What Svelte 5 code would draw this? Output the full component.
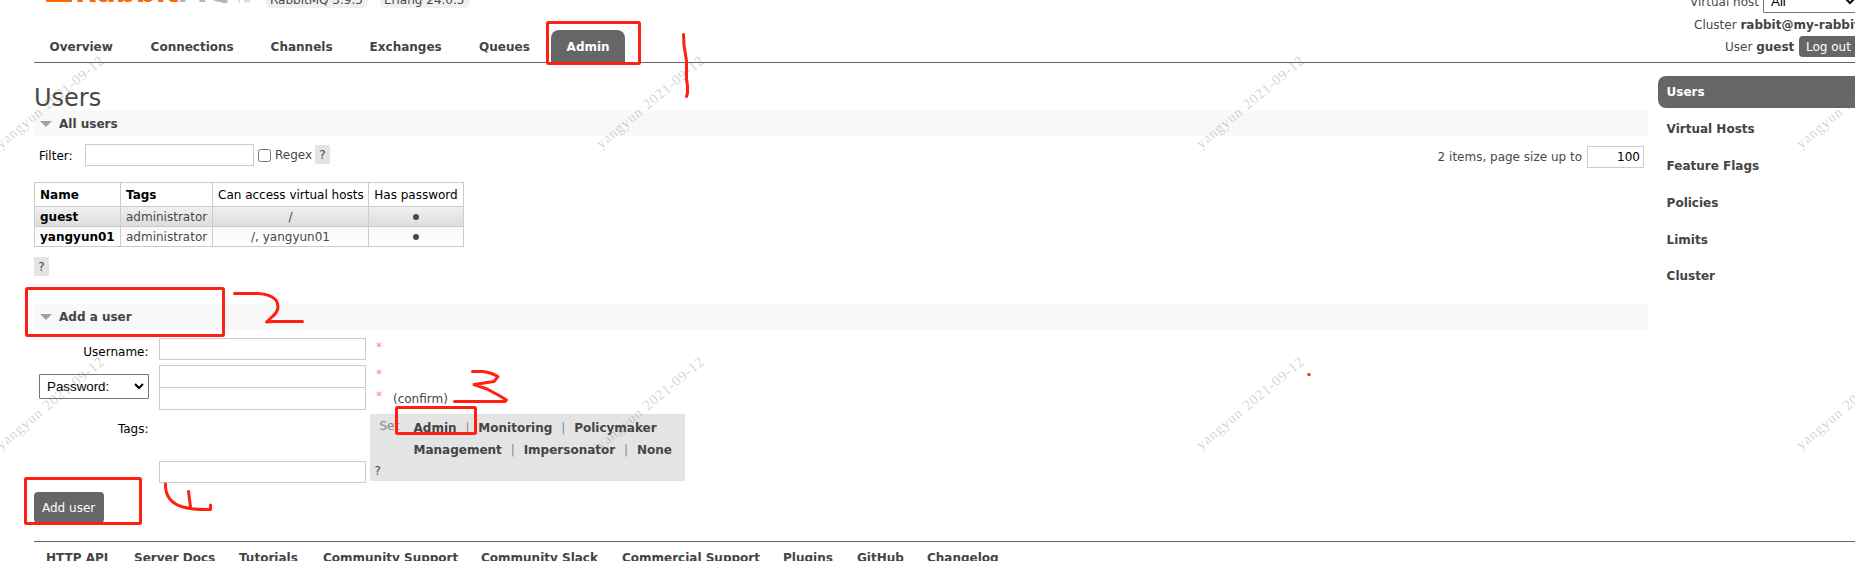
<script>
  const tabs = ['Overview', 'Connections', 'Channels', 'Exchanges', 'Queues', 'Admin'];
  const side = ['Users', 'Virtual Hosts', 'Feature Flags', 'Policies', 'Limits', 'Cluster'];
  const users = [
    { name: 'guest', tags: 'administrator', hosts: '/' },
    { name: 'yangyun01', tags: 'administrator', hosts: '/, yangyun01' }
  ];
  const footer = ['HTTP API', 'Server Docs', 'Tutorials', 'Community Support', 'Community Slack', 'Commercial Support', 'Plugins', 'GitHub', 'Changelog'];
  const marks = [0, 1, 2, 3].flatMap((c) => [0, 1].map((r) => ({ x: 1 + c * 600, y: 149 + r * 301 })));
</script>

<div class="page">
  <header>
    <div class="left">
      <div class="brand">
        <svg class="logo" width="208" height="3" viewBox="0 0 208 3">
          <rect x="0" y="-20" width="26" height="22" rx="1" fill="#f60" />
          <text x="29" y="2" textLength="104" lengthAdjust="spacingAndGlyphs" fill="#f60">Rabbit</text>
          <text class="mq" x="131" y="2" textLength="57" lengthAdjust="spacingAndGlyphs" fill="#b4b4b4">MQ</text>
          <text class="tm" x="191" y="3" textLength="13" fill="#b4b4b4">TM</text>
        </svg>
        <span class="version v1">RabbitMQ 3.9.5</span>
        <span class="version v2">Erlang 24.0.5</span>
      </div>
      <nav class="tabs">
        {#each tabs as t}<a class:on={t === 'Admin'}>{t}</a>{/each}
      </nav>
    </div>
    <div class="right">
      <div class="vh"><span>Virtual host</span><span class="pick">All<svg width="10" height="7" viewBox="0 0 10 7"><path d="M1 1l4 4 4-4" fill="none" stroke="#000" stroke-width="2" /></svg></span></div>
      <div class="cl">Cluster <b>rabbit@my-rabbit</b></div>
      <div class="us"><span>User <b>guest</b></span><button class="logout">Log out</button></div>
    </div>
  </header>

  <div class="body">
    <main>
      <h1>Users</h1>
      <h2><i></i>All users</h2>
      <div class="filter">
        <label>Filter:</label><input class="f" /><input type="checkbox" /><span class="rx">Regex</span><span class="help">?</span>
        <span class="count">2 items, page size up to</span><input class="n" value="100" />
      </div>
      <table>
        <colgroup><col style:width="86px" /><col style:width="92px" /><col style:width="156px" /><col style:width="95px" /></colgroup>
        <thead><tr><th class="b">Name</th><th class="b">Tags</th><th>Can access virtual hosts</th><th>Has password</th></tr></thead>
        <tbody>
          {#each users as u}
            <tr><td class="b">{u.name}</td><td>{u.tags}</td><td class="c">{u.hosts}</td><td class="c"><span class="dot"></span></td></tr>
          {/each}
        </tbody>
      </table>
      <span class="help below">?</span>

      <h2><i></i>Add a user</h2>
      <div class="form">
        <div class="row r1"><label>Username:</label><input /><em>*</em></div>
        <div class="row r2">
          <span class="select">Password:<svg width="10" height="7" viewBox="0 0 10 7"><path d="M1 1l4 4 4-4" fill="none" stroke="#000" stroke-width="2" /></svg></span>
          <div class="pair">
            <div class="row p1"><input /><em>*</em></div>
            <div class="row p2"><input /><em>*</em><span class="confirm">(confirm)</span></div>
          </div>
        </div>
        <div class="row r3">
          <label class="tl">Tags:</label><input class="low" />
          <div class="taglinks">
            <span class="set">Set</span>
            <div class="links">
              <p><b>Admin</b><s>|</s><b>Monitoring</b><s>|</s><b>Policymaker</b></p>
              <p><b>Management</b><s>|</s><b>Impersonator</b><s>|</s><b>None</b></p>
            </div>
            <span class="q">?</span>
          </div>
        </div>
      </div>
      <button class="add">Add user</button>
    </main>
    <aside>
      {#each side as s}<a class:on={s === 'Users'}>{s}</a>{/each}
    </aside>
  </div>
  <footer>{#each footer as f}<a>{f}</a>{/each}</footer>

  <svg class="overlay" width="1855" height="561" viewBox="0 0 1855 561">
    <g class="marks">
      {#each marks as m}
        <g transform="translate({m.x} {m.y}) rotate(-39.8)">
          <text textLength="55">yangyun</text>
          <text x="61" textLength="74">2021-09-12</text>
        </g>
      {/each}
    </g>
    <g fill="none" stroke="#ff2012" stroke-width="3" stroke-linecap="round" stroke-linejoin="round">
      <rect x="547.5" y="22.5" width="92" height="41" rx="1" />
      <rect x="26.5" y="288.5" width="197" height="47" rx="1" />
      <rect x="396.5" y="407.5" width="79" height="26" rx="1" />
      <rect x="25.5" y="478.5" width="115" height="45" rx="1" />
      <path d="M683.5 34.5L684 45L686.5 61V79L687.5 86V93L686.5 96.5" />
      <path d="M234.5 293.5H258Q270 294 276 300Q281 309 273 316L266.5 322L273 321.5H302.5" />
      <path d="M472.5 371.5H482Q490 372 498 376.5L494 381.5L474 384.5L487 389L500 396L506.5 400L505 401.5H454.5" />
      <path d="M165.5 484C165 498 173 504 183 507Q194 510 210.5 509.5V505M188.5 491.5L190.5 507" />
      <path d="M1308.8 374.5h.4" />
    </g>
  </svg>
</div>

<style>
  :global(body) { margin: 0; background: #fff; overflow: hidden; }
  .page { position: relative; width: 1855px; height: 561px; overflow: hidden; font: 12px/16px 'DejaVu Sans', Verdana, sans-serif; color: #484848; }
  .page * { box-sizing: border-box; }
  header { height: 63px; margin-left: 34px; border-bottom: 1px solid #666; display: flex; justify-content: space-between; }
  .brand { height: 30px; padding-left: 12px; display: flex; align-items: flex-start; }
  .logo { font: bold 28px 'DejaVu Sans', sans-serif; flex: none; overflow: hidden; }
  .logo .tm { font-size: 7px; font-weight: normal; }
  .version { height: 24px; margin-top: -16px; padding: 8px 0 0 4px; background: #f0f0f0; border-radius: 5px; white-space: nowrap; line-height: 16px; }
  .v1 { width: 102px; margin-left: 12px; }
  .v2 { width: 90px; margin-left: 12px; }
  .tabs { display: grid; grid-template-columns: 101px 120px 99px 109.5px 87.5px 74px; height: 32px; font-weight: bold; color: #444; line-height: 34px; }
  .tabs a { padding-left: 15.6px; }
  .tabs a.on { background: #666; color: #fff; border-radius: 8px 8px 0 0; }
  .right { width: 165px; white-space: nowrap; overflow: hidden; }
  .right b { color: #444; }
  .vh { display: flex; height: 13px; }
  .vh > span:first-child { margin-top: -6px; width: 73px; flex: none; }
  .pick { margin-top: -13px; height: 26px; width: 110px; flex: none; border: 1px solid #767676; border-radius: 1px; padding: 6px 0 0 7px; color: #000; font: 13.333px/16px 'Liberation Sans', sans-serif; }
  .pick svg { margin-left: 59px; vertical-align: 1px; }
  .cl { padding: 4px 0 0 4px; height: 23px; }
  .us { display: flex; padding-left: 35px; line-height: 22px; }
  .us span { width: 74px; flex: none; }
  button { display: block; border: 0; background: #666; color: #fff; font: 12px/16px 'DejaVu Sans', sans-serif; white-space: nowrap; }
  .logout { height: 21px; width: 61px; flex: none; padding: 1px 0 0 7px; border-radius: 4px; text-align: left; }

  .body { display: flex; height: 478px; padding-left: 34px; }
  main { width: 1614px; margin-right: 10px; }
  h1 { margin: 0; height: 48px; padding-top: 20px; font-size: 24px; font-weight: normal; line-height: 30px; color: #484848; }
  h2 { margin: 0; height: 25px; background: #f8f8f8; display: flex; align-items: center; font-size: 12px; color: #444; }
  h2 i { border: 6px solid transparent; border-top: 6px solid #a0a0a0; border-bottom: 0; margin: 1px 7.5px 0 5.5px; }
  input { font: 12px 'DejaVu Sans', sans-serif; border: 1px solid #ccc; height: 22px; margin: 0; padding: 0 4px; border-radius: 0; flex: none; }
  label { color: #000; flex: none; }
  .filter { display: flex; align-items: flex-start; height: 46px; padding: 8px 4px 0 5px; }
  .filter label { width: 46px; margin-top: 4px; }
  .filter .f { width: 169px; }
  .filter input[type='checkbox'] { width: 13px; height: 13px; margin: 5px 4px 0; }
  .rx { width: 40px; margin-top: 3px; }
  .help { width: 15px; height: 19px; margin-top: 1px; background: #e4e4e4; text-align: center; line-height: 20px; display: block; }
  .count { margin: 5px 5px 0 auto; }
  .filter .n { width: 57px; margin-top: 2px; text-align: right; padding-right: 3px; }
  table { border-collapse: collapse; table-layout: fixed; width: 430px; }
  th, td { border: 1px solid #ccc; padding: 1px 5px 0; height: 20px; line-height: 18px; text-align: left; white-space: nowrap; }
  th { height: 24px; line-height: 22px; font-weight: normal; color: #000; text-align: center; }
  .b { font-weight: bold; color: #000; text-align: left; }
  tbody tr:first-child { background: linear-gradient(#f0f0f0, #dcdcdc); }
  tbody tr:last-child { background: linear-gradient(#f8f8f8, #fff); }
  .c { text-align: center; }
  .dot { display: inline-block; width: 6px; height: 6px; border-radius: 3px; background: #484848; vertical-align: 1px; }
  .below { margin: 10px 0 28px; }

  .form { padding-top: 9px; height: 163px; }
  .row { display: flex; }
  .form input { width: 207px; }
  .r1 { height: 27px; }
  .r1 label, .tl { width: 125px; padding-right: 10.5px; text-align: right; margin-top: 6px; }
  em { color: #f88; font-style: normal; margin: 1px 0 0 10px; width: 17px; line-height: 16px; height: 16px; }
  .select { width: 110px; height: 25px; margin: 9px 10px 0 5px; padding: 0 4px 0 7px; border: 1px solid #767676; border-radius: 1px; display: flex; align-items: center; justify-content: space-between; color: #000; font: 13.333px 'Liberation Sans', sans-serif; }
  .pair .row { height: 22px; }
  .pair input { height: 23px; }
  .pair .p2 input { height: 23px; }
  .confirm { margin-top: 4px; }
  .r3 { height: 74px; padding-top: 5px; }
  .tl { margin-top: 7px; }
  .low { margin-top: 47px; }
  .taglinks { width: 315px; height: 67px; margin-left: 4px; background: #e4e4e4; display: grid; grid-template-columns: 34px 1fr; grid-template-rows: 45px 22px; padding-left: 9.5px; }
  .set { color: #888; margin-top: 4px; }
  .links { padding-top: 3px; }
  .links p { margin: 0; line-height: 22px; display: flex; color: #444; }
  s { text-decoration: none; color: #888; width: 21.8px; text-align: center; }
  .q { margin-left: -5px; line-height: 25px; }
  .add { width: 70px; height: 31px; padding: 0 0 0 8px; text-align: left; border-radius: 4px; }

  aside { width: 197px; padding-top: 13px; font-weight: bold; color: #444; }
  aside a { display: block; height: 32px; line-height: 32px; margin-bottom: 4.9px; padding-left: 8.6px; }
  aside a.on { background: #666; color: #fff; border-radius: 8px 0 0 8px; }
  footer { margin-left: 34px; border-top: 1px solid #666; padding: 8px 0 0 12px; display: grid; grid-template-columns: 88px 105px 84px 158px 141px 161px 74px 70px auto; font-weight: bold; color: #444; white-space: nowrap; }
  .overlay { position: absolute; left: 0; top: 0; pointer-events: none; }
  .marks { font: 14.5px 'Liberation Serif', serif; fill: #777; fill-opacity: .32; }
</style>
